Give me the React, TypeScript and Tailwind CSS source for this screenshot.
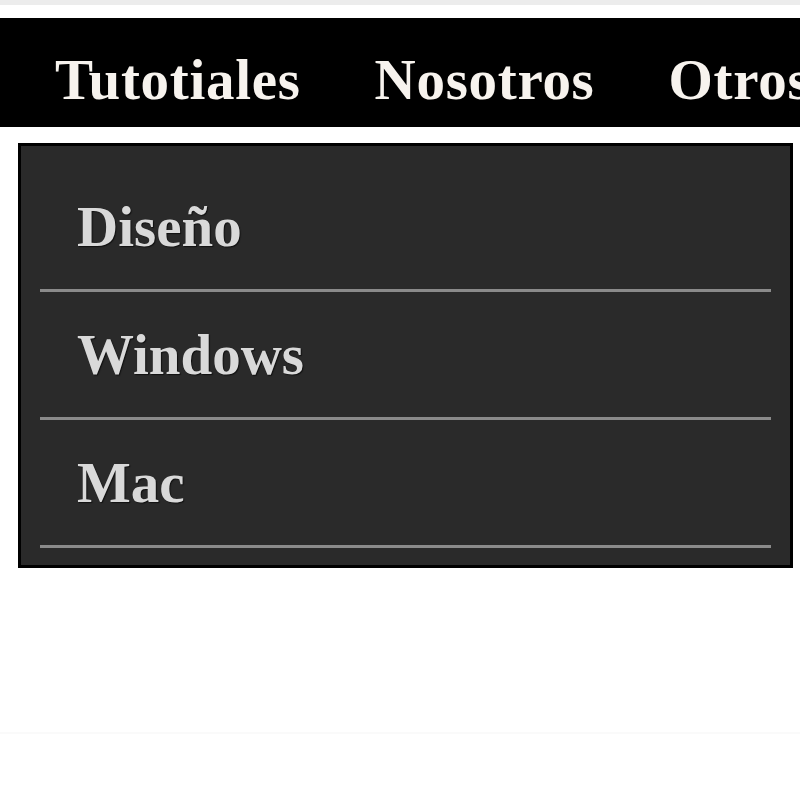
const NAV = ["Tutotiales", "Nosotros", "Otros"];
const SUB = ["Diseño", "Windows", "Mac"];

export default function App() {
  return (
    <div className="min-h-screen w-[800px] overflow-hidden bg-white font-['Liberation_Serif',serif] font-bold">
      {/* top strip */}
      <div className="h-[5px] bg-[#ececec]" />
      <div className="h-[13px]" />

      {/* nav bar */}
      <nav className="h-[109px] bg-black pl-[18px] pt-[33px] flex items-start whitespace-nowrap">
        {NAV.map((item) => (
          <span
            key={item}
            className="px-[37px] text-[57px] leading-none tracking-[0.7px] text-[#f7f3ee] [text-shadow:1px_1px_1px_#000]"
          >
            {item}
          </span>
        ))}
      </nav>

      {/* dropdown panel */}
      <div className="ml-[18px] mr-[7px] mt-[16px] border-[3px] border-black bg-[#2a2a2a] px-[19px] pt-[18px] pb-[17px]">
        <ul>
          {SUB.map((item) => (
            <li
              key={item}
              className="h-[128px] border-b-[3px] border-[#8a8a8a] pl-[37px] flex items-center"
            >
              <span className="text-[57px] leading-none text-[#d9d9d9] [text-shadow:1px_1px_1px_#111]">
                {item}
              </span>
            </li>
          ))}
        </ul>
      </div>

      <div className="mt-[164px] h-[2px] bg-[#fafafa]" />
    </div>
  );
}
